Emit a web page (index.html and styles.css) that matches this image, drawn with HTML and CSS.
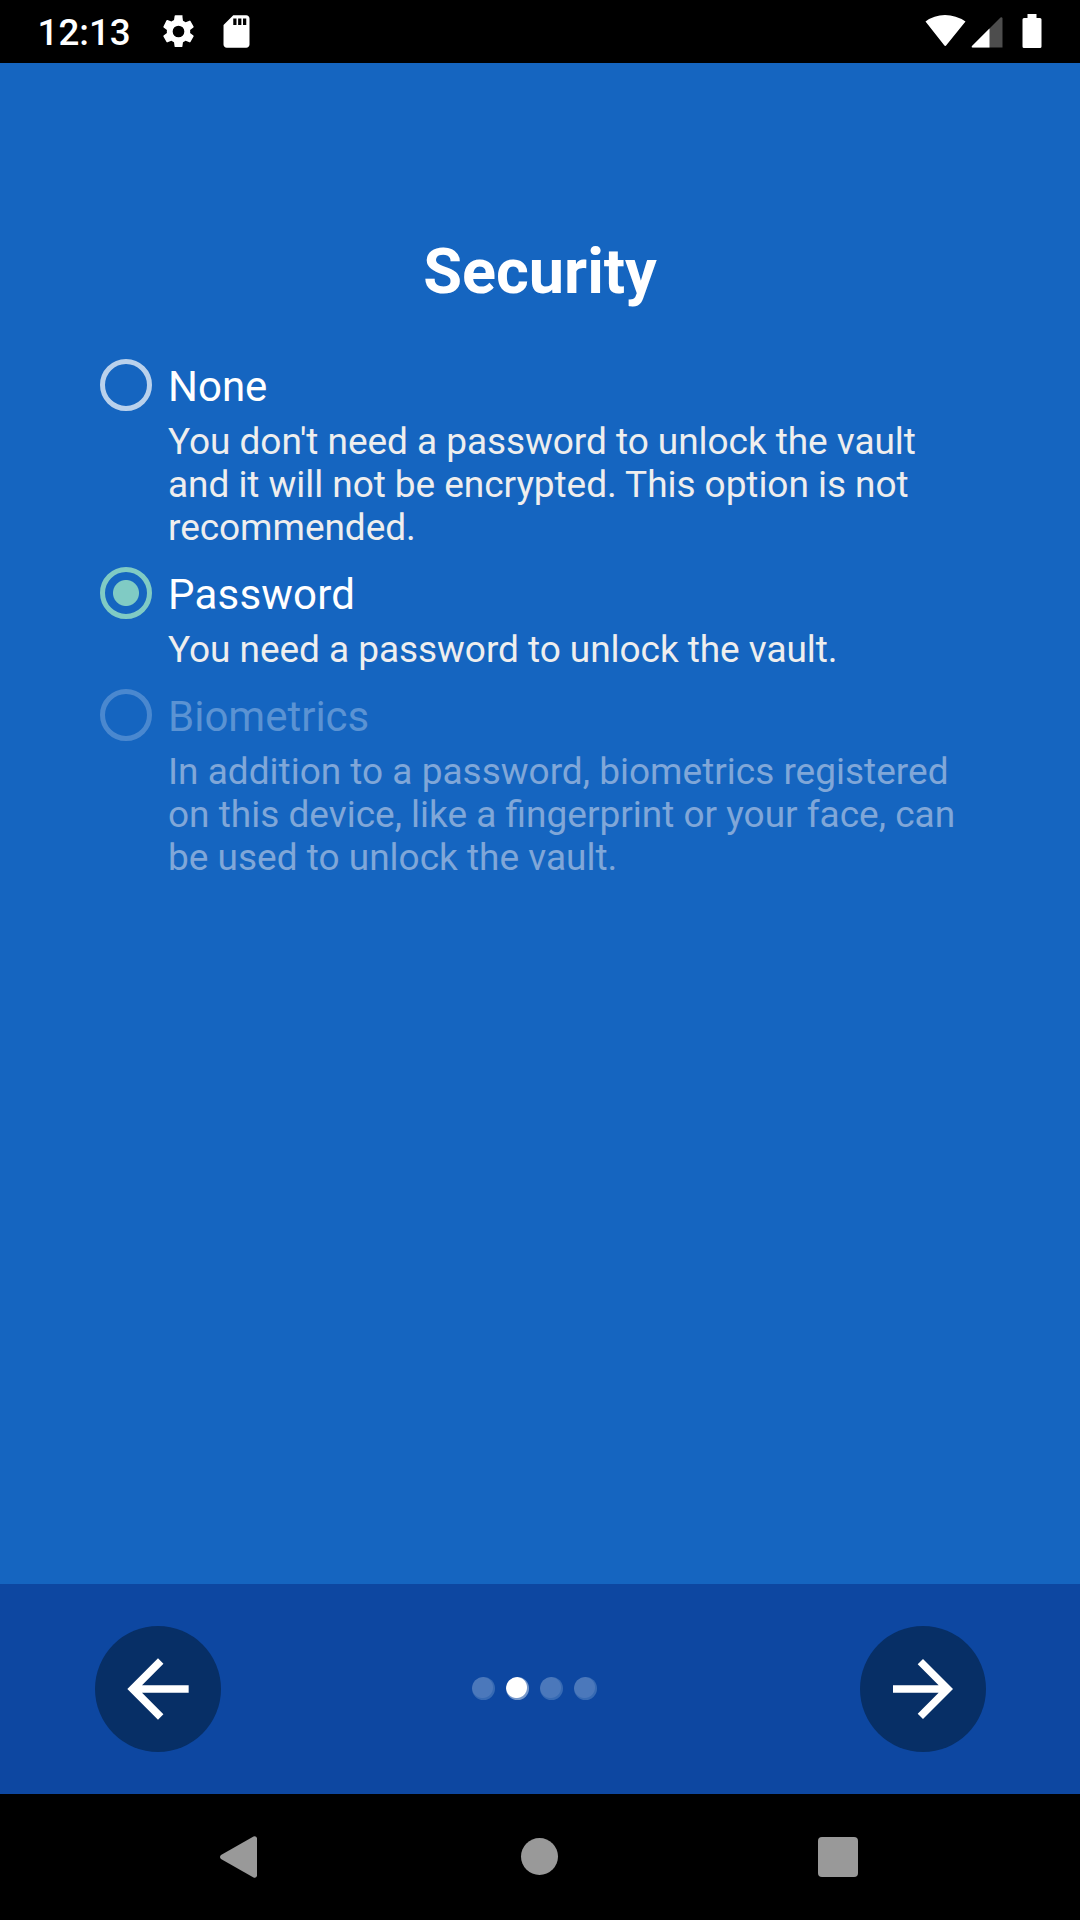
FILE: index.html
```html
<!DOCTYPE html>
<html lang="en">
<head>
<meta charset="utf-8">
<title>Security</title>
<link rel="stylesheet" href="styles.css">
</head>
<body>
<header class="status">
  <span class="clock">12:13</span>
  <svg class="gear" viewBox="0 0 24 24"><path d="M19.14 12.94c.04-.3.06-.61.06-.94s-.02-.64-.07-.94l2.03-1.58a.49.49 0 0 0 .12-.61l-1.92-3.32a.49.49 0 0 0-.59-.22l-2.39.96a7 7 0 0 0-1.62-.94l-.36-2.54A.48.48 0 0 0 13.92 2h-3.84a.48.48 0 0 0-.47.41l-.36 2.54a7.3 7.3 0 0 0-1.62.94l-2.39-.96a.48.48 0 0 0-.59.22L2.74 8.87a.47.47 0 0 0 .12.61l2.03 1.58a6 6 0 0 0-.02 1.88l-2.03 1.58a.49.49 0 0 0-.12.61l1.92 3.32c.12.22.37.29.59.22l2.39-.96c.5.38 1.03.7 1.62.94l.36 2.54c.05.24.24.41.48.41h3.84c.24 0 .44-.17.47-.41l.36-2.54a7 7 0 0 0 1.62-.94l2.39.96c.22.08.47 0 .59-.22l1.92-3.32a.47.47 0 0 0-.12-.61zM12 15.6a3.6 3.6 0 1 1 0-7.2 3.6 3.6 0 0 1 0 7.2z"/></svg>
  <svg class="card" viewBox="0 0 24 24"><path d="M18 2h-8L4.02 8 4 20c0 1.1.9 2 2 2h12c1.1 0 2-.9 2-2V4c0-1.1-.9-2-2-2zm-6 6h-2V4h2zm3 0h-2V4h2zm3 0h-2V4h2z"/></svg>
  <div class="system">
    <svg class="wifi" viewBox="0 0 42 34"><path d="M1.5 7.5Q10 1 21 1T41.5 7.5L22.5 31Q21.300 33 20 31Z"/></svg>
    <svg class="signal" viewBox="0 0 32 32"><path class="faint" d="M31 2.5Q31.5 1 31.5 2.5V31.5H1Q0 31.5 1 30L29.5 1.500Q31 .5 31.5 2.5Z"/><path d="M18.5 12.5V31.5H1.5Q0 31 1 30Z"/></svg>
    <svg class="battery" viewBox="0 0 20 34"><path d="M5.5 0h9v4h3.5q1.5 0 1.5 1.5v27q0 1.5-1.5 1.5H2q-1.5 0-1.5-1.5v-27Q.5 4 2 4h3.5z"/></svg>
  </div>
</header>
<main class="content">
  <h1 class="title">Security</h1>
  <section class="option tight">
    <span class="radio"></span>
    <div><h2 class="label">None</h2><p class="desc">You don't need a password to unlock the vault<br>and it will not be encrypted. This option is not<br>recommended.</p></div>
  </section>
  <section class="option tight selected">
    <span class="radio"></span>
    <div><h2 class="label">Password</h2><p class="desc">You need a password to unlock the vault.</p></div>
  </section>
  <section class="option disabled">
    <span class="radio"></span>
    <div><h2 class="label">Biometrics</h2><p class="desc">In addition to a password, biometrics registered<br>on this device, like a fingerprint or your face, can<br>be used to unlock the vault.</p></div>
  </section>
</main>
<footer class="pager">
  <button class="round" aria-label="Back"><svg viewBox="0 0 24 24"><path d="M20 11H7.83l5.59-5.59L12 4l-8 8 8 8 1.41-1.41L7.83 13H20z"/></svg></button>
  <div class="dots"><i class="dot"></i><i class="dot active"></i><i class="dot"></i><i class="dot"></i></div>
  <button class="round next" aria-label="Next"><svg viewBox="0 0 24 24"><path d="M12 4l-1.41 1.41L16.17 11H4v2h12.17l-5.58 5.59L12 20l8-8z"/></svg></button>
</footer>
<nav class="navbar">
  <svg viewBox="0 0 40 44"><path d="M33.5 1.5Q36 .5 37 3v38q-1 2.500-3.5 1.500L1 24q-2-2 0-4z"/></svg>
  <svg viewBox="0 0 40 44"><circle cx="19.5" cy="21.5" r="18.5"/></svg>
  <svg viewBox="0 0 40 44"><rect x="-2" y="2" width="40" height="40" rx="4"/></svg>
</nav>
</body>
</html>
```
FILE: styles.css
```css
* { box-sizing: border-box; margin: 0; padding: 0; }
body { width: 1080px; height: 1920px; display: flex; flex-direction: column; background: #1565c0; font-family: Roboto, sans-serif; color: #fff; overflow: hidden; }
svg { display: block; fill: currentColor; }
.status { height: 63px; background: #000; display: flex; align-items: center; padding: 0 38.5px 0 37.5px; }
.clock { font-size: 36.75px; font-weight: 500; width: 121px; padding-top: 2px; }
.gear { width: 39px; height: 39px; }
.card { width: 39px; height: 39px; margin-left: 19px; }
.system { display: flex; align-items: center; margin-left: auto; }
.wifi { width: 42px; height: 34px; margin-top: -2px; }
.signal { width: 32px; height: 32px; margin-left: 5px; }
.faint { fill: #4d4d4d; }
.battery { width: 20px; height: 34px; margin: -1px 0 0 19px; }
.content { flex: 1; padding: 172px 100px 0; }
.title { font-size: 63px; line-height: 74px; text-align: center; font-weight: 700; margin-bottom: 50px; }
.option { display: flex; margin-bottom: 18px; }
.radio { width: 52px; height: 52px; border: 5px solid #b9d1ec; border-radius: 50%; margin-right: 16px; flex: none; }
.label { font-size: 42px; line-height: 56px; font-weight: 400; }
.desc { font-size: 37px; line-height: 43px; margin-top: 5px; white-space: nowrap; color: #eee; }
.tight .desc { letter-spacing: -.05px; }
.selected .label { letter-spacing: .2px; }
.selected .radio { border-color: #80cbc4; background: radial-gradient(circle, #80cbc4 12.5px, transparent 13.5px); }
.disabled .radio { border-color: #4a88cf; }
.disabled .label { color: #5b93d3; }
.disabled .desc { color: #80a7d8; }
.pager { height: 210px; background: #0d47a1; display: flex; align-items: center; justify-content: space-between; padding: 0 94px 0 95px; }
.round { width: 126px; height: 126px; border: 0; border-radius: 50%; background: #072f66; color: #fff; display: grid; place-items: center; }
.round svg { width: 92px; height: 92px; }
.round.next svg { width: 90px; height: 90px; }
.dots { display: flex; gap: 11px; margin: 0 12px 1px 0; }
.dot { width: 23px; height: 23px; border-radius: 50%; background: radial-gradient(circle at 10.5px 10.5px, #4b78bb 10px, #376ab3 11px); }
.active { background: radial-gradient(circle at 10.5px 10.5px, #fff 10px, #7698cb 11px); }
.navbar { height: 126px; background: #000; color: #999; display: flex; align-items: center; justify-content: space-between; padding: 0 220px; }
.navbar svg { width: 40px; height: 44px; overflow: visible; }
```
